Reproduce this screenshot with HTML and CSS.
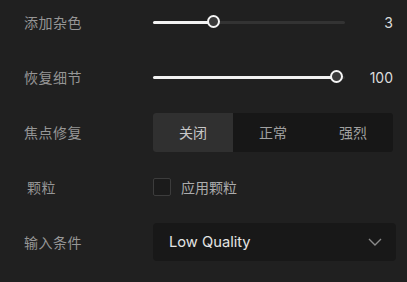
FILE: index.html
```html
<!DOCTYPE html>
<html lang="zh-CN">

<head>
    <meta charset="UTF-8">
    <meta name="viewport" content="width=device-width, initial-scale=1.0">
    <title>图像设置</title>
    <link rel="stylesheet" href="styles.css">
</head>

<body>

    <div class="panel">
        <div class="row">
            <span class="label">添加杂色</span>
            <div class="slider">
                <div class="track">
                    <div class="fill" style="width: 61px"></div>
                    <div class="thumb" style="left: 61px"></div>
                </div>
                <span class="value">3</span>
            </div>
        </div>

        <div class="row">
            <span class="label">恢复细节</span>
            <div class="slider">
                <div class="track">
                    <div class="fill" style="width: 184px"></div>
                    <div class="thumb" style="left: 184px"></div>
                </div>
                <span class="value">100</span>
            </div>
        </div>

        <div class="row">
            <span class="label">焦点修复</span>
            <div class="segments">
                <button class="segment active">关闭</button>
                <button class="segment">正常</button>
                <button class="segment">强烈</button>
            </div>
        </div>

        <div class="row">
            <span class="label label-short">颗粒</span>
            <label class="check">
                <span class="box"></span>
                <span>应用颗粒</span>
            </label>
        </div>

        <div class="row">
            <span class="label">输入条件</span>
            <div class="select">
                <span>Low Quality</span>
                <svg width="14" height="8" viewBox="0 0 14 8">
                    <path d="M1 1 L7 7 L13 1" fill="none" stroke="#8a8a8a" stroke-width="1.4" />
                </svg>
            </div>
        </div>
    </div>

</body>

</html>
```

FILE: styles.css
```css
body {
    margin: 0;
    padding: 0;
    background-color: #202020;
    color: #a8a8a8;
    font-family: "Inter", "Noto Sans CJK SC", sans-serif;
}

.panel {
    display: flex;
    flex-direction: column;
    gap: 11px;
    padding: 0 11px 0 24px;
}

.row {
    display: grid;
    grid-template-columns: 129px 1fr;
    align-items: center;
    height: 44px;
}

.label {
    font-family: "Noto Sans CJK SC", sans-serif;
    font-size: 14px;
    color: #969696;
    letter-spacing: 0.5px;
}

.label-short {
    padding-left: 3px;
}

.slider {
    display: flex;
    align-items: center;
}

.track {
    position: relative;
    width: 192px;
    height: 3px;
    background-color: #333;
    border-radius: 2px;
}

.fill {
    height: 3px;
    background-color: #f2f2f2;
    border-radius: 2px;
}

.thumb {
    position: absolute;
    top: 50%;
    width: 9px;
    height: 9px;
    margin: -7px 0 0 -7px;
    border: 2.5px solid #f5f5f5;
    border-radius: 50%;
    background-color: #3a3a3a;
}

.value {
    flex: 1;
    text-align: right;
    font-size: 14px;
    color: #dcdcdc;
    padding-right: 3px;
}

.segments {
    display: flex;
    width: 240px;
    height: 39px;
    background-color: #171717;
    border-radius: 3px;
    overflow: hidden;
}

.segment {
    flex: 1;
    border: none;
    background: none;
    color: #a0a0a0;
    font-family: "Noto Sans CJK SC", sans-serif;
    font-size: 14px;
    padding: 0;
}

.segment.active {
    flex: 0 0 80px;
    background-color: #303030;
    color: #c8c8c8;
}

.check {
    display: flex;
    align-items: center;
    gap: 10px;
    font-family: "Noto Sans CJK SC", sans-serif;
    font-size: 14px;
    color: #acacac;
}

.box {
    width: 16px;
    height: 16px;
    border: 1px solid #3c3c3c;
    border-radius: 2px;
    background-color: #1b1b1b;
}

.select {
    display: flex;
    align-items: center;
    justify-content: space-between;
    width: 243px;
    height: 38px;
    box-sizing: border-box;
    padding: 0 14px 0 16px;
    background-color: #181818;
    border-radius: 4px;
    font-size: 14.7px;
    color: #e4e4e4;
}
```
